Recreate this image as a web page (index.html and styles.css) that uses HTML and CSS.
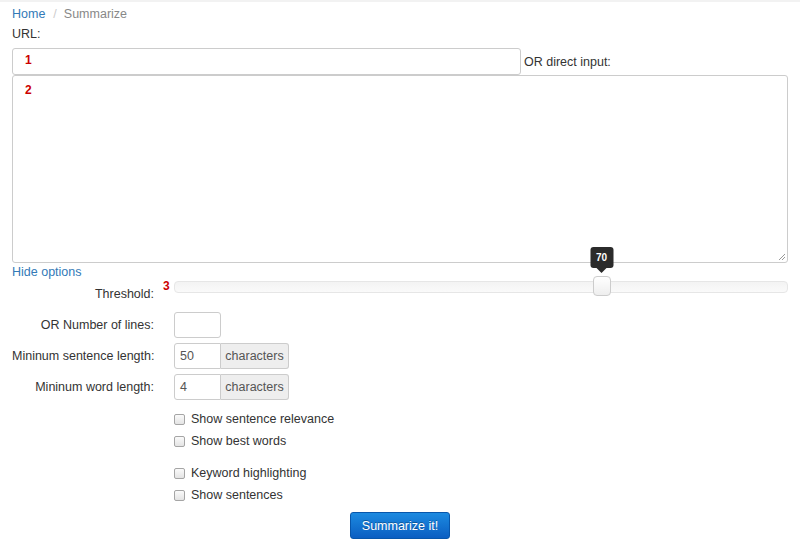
FILE: index.html
```html
<!DOCTYPE html>
<html>
<head>
<meta charset="utf-8">
<link rel="stylesheet" href="styles.css">
</head>
<body>
<div class="page">
  <div class="crumbs"><a href="#" class="link">Home</a><span class="sep">/</span><span class="current">Summarize</span></div>
  <div class="url-label">URL:</div>
  <div class="url-row">
    <div class="field url-field"><span class="marker">1</span></div>
    <span class="or-label">OR direct input:</span>
  </div>
  <div class="field textarea"><span class="marker">2</span>
    <svg class="grip" width="9" height="9" viewBox="0 0 9 9"><path d="M8 2L2 8M8 5L5 8" stroke="#999" stroke-width="1"/></svg>
  </div>
  <a href="#" class="link hide">Hide options</a>
  <div class="form">
    <div class="row slider-row">
      <div class="label lbl-threshold">Threshold:</div>
      <div class="ctrl">
        <span class="marker m3">3</span>
        <div class="track">
          <div class="handle" style="left:69.7%">
            <div class="tip">70</div>
          </div>
        </div>
      </div>
    </div>
    <div class="row">
      <div class="label">OR Number of lines:</div>
      <div class="ctrl"><div class="field small"></div></div>
    </div>
    <div class="row">
      <div class="label">Mininum sentence length:</div>
      <div class="ctrl"><div class="group"><div class="field small gfield">50</div><div class="addon">characters</div></div></div>
    </div>
    <div class="row">
      <div class="label">Mininum word length:</div>
      <div class="ctrl"><div class="group"><div class="field small gfield">4</div><div class="addon">characters</div></div></div>
    </div>
    <div class="checks">
      <label class="check"><span class="box"></span>Show sentence relevance</label>
      <label class="check"><span class="box"></span>Show best words</label>
    </div>
    <div class="checks second">
      <label class="check"><span class="box"></span>Keyword highlighting</label>
      <label class="check"><span class="box"></span>Show sentences</label>
    </div>
  </div>
  <div class="actions"><button class="btn">Summarize it!</button></div>
</div>
</body>
</html>
```
FILE: styles.css
```css
* { box-sizing: border-box; }
html, body { margin: 0; padding: 0; background: #fff; }
body { font-family: "Liberation Sans", Arial, sans-serif; font-size: 12.5px; color: #333; }
.page { padding: 5px 12px 0 12px; border-top: 2px solid #f2f2f2; }
.link { color: #337ab7; text-decoration: none; }
.crumbs { height: 14px; line-height: 14px; }
.sep { color: #ccc; padding: 0 7px 0 8px; }
.current { color: #888; }
.url-label { margin-top: 6px; line-height: 15px; height: 15px; }
.url-row { display: flex; align-items: center; margin-top: 6px; }
.field { border: 1px solid #ccc; border-radius: 3px; background: #fff; position: relative; }
.url-field { width: 509px; height: 27px; }
.marker { position: absolute; left: 12px; top: 4px; color: #c00; font-weight: bold; font-size: 12px; }
.or-label { margin-left: 3px; padding-top: 0; }
.textarea { width: 776px; height: 188px; }
.textarea .marker { top: 7px; }
.grip { position: absolute; right: 1px; bottom: 1px; }
.hide { display: block; margin-top: 2px; line-height: 15px; height: 15px; }
.row { display: flex; align-items: center; }
.label { width: 142px; text-align: right; white-space: nowrap; }
.ctrl { margin-left: 20px; flex: 1; position: relative; display: flex; }
.slider-row { height: 29px; align-items: flex-start; }
.lbl-threshold { padding-top: 7px; }
.slider-row .ctrl { padding-top: 1px; }
.m3 { position: absolute; left: -11px; top: -1px; color: #c00; font-weight: bold; font-size: 12px; }
.track { flex: 1; height: 12px; border: 1px solid #e6e6e6; border-radius: 4px; background: linear-gradient(#f3f3f3, #fafafa); position: relative; }
.handle { position: absolute; top: -6px; width: 18px; height: 20px; margin-left: -9px; border: 1px solid #ccc; border-radius: 4px; background: linear-gradient(#fff, #eee); }
.tip { position: absolute; bottom: 27px; left: 50%; transform: translateX(-50%); width: 23px; height: 21px; background: #2b2b2b; color: #fff; font-size: 10px; font-weight: bold; border-radius: 3px; text-align: center; line-height: 21px; }
.tip::after { content: ""; position: absolute; left: 50%; bottom: -5px; margin-left: -5px; border-left: 5px solid transparent; border-right: 5px solid transparent; border-top: 5px solid #2b2b2b; }
.row + .row { margin-top: 5px; }
.slider-row + .row { margin-top: 3px; }
.small { width: 47px; height: 26px; }
.group { display: flex; }
.gfield { border-radius: 3px 0 0 3px; padding: 5px 0 0 5px; color: #555; }
.addon { width: 68px; height: 26px; border: 1px solid #ccc; border-left: 0; border-radius: 0 3px 3px 0; background: #eee; color: #555; text-align: center; line-height: 24px; }
.checks { margin-left: 162px; margin-top: 8px; }
.checks.second { margin-top: 10px; }
.check { display: flex; align-items: center; height: 22px; }
.box { width: 11px; height: 11px; border: 1px solid #a5a5a5; border-radius: 2px; background: linear-gradient(#fafafa, #e4e4e4); margin-right: 6px; }
.actions { display: flex; justify-content: center; margin-top: 6px; }
.btn { font-family: "Liberation Sans", Arial, sans-serif; font-size: 12.5px; color: #fff; text-shadow: 0 -1px 0 rgba(0,0,0,0.3); background: linear-gradient(#1c8ae0, #0a5ec2); border: 1px solid #0756ab; border-radius: 3px; width: 100px; height: 27px; padding: 0; }
```
